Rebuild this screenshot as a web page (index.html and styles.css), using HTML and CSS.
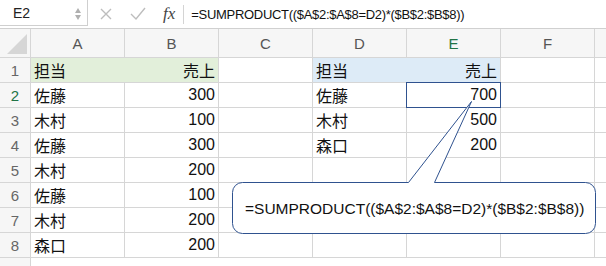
FILE: index.html
```html
<!DOCTYPE html>
<html lang="ja">
<head>
    <meta charset="UTF-8">
    <title>SUMPRODUCT</title>
    <link rel="stylesheet" href="styles.css">
</head>
<body>

<div class="formula-bar">
    <div class="name-box">
        <span>E2</span>
        <svg class="spin" width="8" height="16" viewBox="0 0 8 16">
            <path d="M1 8 L4 3 L7 8 Z" fill="#b0b0b0"/>
            <path d="M1 10 L4 15 L7 10 Z" fill="#b0b0b0"/>
        </svg>
    </div>
    <div class="actions">
        <svg width="14" height="14" viewBox="0 0 14 14">
            <path d="M2 2 L12 12 M12 2 L2 12" stroke="#bdbdbd" stroke-width="1.4" fill="none"/>
        </svg>
        <svg width="16" height="14" viewBox="0 0 16 14">
            <path d="M1 7 L6 12 L15 1" stroke="#bdbdbd" stroke-width="1.4" fill="none"/>
        </svg>
    </div>
    <div class="fx">fx</div>
    <div class="formula">=SUMPRODUCT(($A$2:$A$8=D2)*($B$2:$B$8))</div>
</div>

<div class="sheet">
    <div class="corner">
        <svg width="30" height="28" viewBox="0 0 30 28"><path d="M7 25 L27 25 L27 5 Z" fill="#d6d6d6"/></svg>
    </div>
    <div class="hd">A</div>
    <div class="hd">B</div>
    <div class="hd">C</div>
    <div class="hd">D</div>
    <div class="hd active">E</div>
    <div class="hd">F</div>
    <div class="hd"></div>

    <div class="rn">1</div>
    <div class="c green join">担当</div>
    <div class="c green num">売上</div>
    <div class="c"></div>
    <div class="c blue join">担当</div>
    <div class="c blue num">売上</div>
    <div class="c"></div>
    <div class="c"></div>

    <div class="rn active">2</div>
    <div class="c">佐藤</div>
    <div class="c num">300</div>
    <div class="c"></div>
    <div class="c">佐藤</div>
    <div class="c num selected">700</div>
    <div class="c"></div>
    <div class="c"></div>

    <div class="rn">3</div>
    <div class="c">木村</div>
    <div class="c num">100</div>
    <div class="c"></div>
    <div class="c">木村</div>
    <div class="c num">500</div>
    <div class="c"></div>
    <div class="c"></div>

    <div class="rn">4</div>
    <div class="c">佐藤</div>
    <div class="c num">300</div>
    <div class="c"></div>
    <div class="c">森口</div>
    <div class="c num">200</div>
    <div class="c"></div>
    <div class="c"></div>

    <div class="rn">5</div>
    <div class="c">木村</div>
    <div class="c num">200</div>
    <div class="c"></div>
    <div class="c"></div>
    <div class="c"></div>
    <div class="c"></div>
    <div class="c"></div>

    <div class="rn">6</div>
    <div class="c">佐藤</div>
    <div class="c num">100</div>
    <div class="c"></div>
    <div class="c"></div>
    <div class="c"></div>
    <div class="c"></div>
    <div class="c"></div>

    <div class="rn">7</div>
    <div class="c">木村</div>
    <div class="c num">200</div>
    <div class="c"></div>
    <div class="c"></div>
    <div class="c"></div>
    <div class="c"></div>
    <div class="c"></div>

    <div class="rn">8</div>
    <div class="c">森口</div>
    <div class="c num">200</div>
    <div class="c"></div>
    <div class="c"></div>
    <div class="c"></div>
    <div class="c"></div>
    <div class="c"></div>
</div>

<!-- callout shape laid over the sheet -->
<svg class="callout" width="606" height="266" viewBox="0 0 606 266">
    <path d="M242.5 182.5 H408.5 L471.5 101.5 L434.5 182.5 H585.5 A10 10 0 0 1 595.5 192.5 V223.5 A10 10 0 0 1 585.5 233.5 H242.5 A10 10 0 0 1 232.5 223.5 V192.5 A10 10 0 0 1 242.5 182.5 Z"
          fill="#fff" stroke="#2f528f" stroke-width="1"/>
    <text x="245" y="214" class="callout-text">=SUMPRODUCT(($A$2:$A$8=D2)*($B$2:$B$8))</text>
</svg>

</body>
</html>
```

FILE: styles.css
```css
body {
    margin: 0;
    width: 606px;
    height: 266px;
    overflow: hidden;
    position: relative;
    background-color: #fff;
    font-family: "Liberation Sans", "Noto Sans CJK JP", sans-serif;
}
.formula-bar {
    display: flex;
    align-items: center;
    height: 28px;
    border-bottom: 1px solid #d0d0d0;
    background-color: #fff;
}
.name-box {
    box-sizing: border-box;
    width: 88px;
    height: 26px;
    align-self: flex-start;
    border: 1px solid #cfcfcf;
    border-left: none;
    border-top: none;
    display: flex;
    align-items: center;
    justify-content: space-between;
    padding: 0 5px 0 13px;
    font-size: 14px;
    color: #222;
}
.actions {
    display: flex;
    align-items: center;
    gap: 17px;
    margin-left: 11px;
    width: 64px;
}
.fx {
    font-family: "Liberation Serif", serif;
    font-style: italic;
    font-size: 17px;
    color: #444;
    padding: 0 8px 2px 0;
    border-right: 1px solid #d4d4d4;
    line-height: 17px;
}
.formula {
    margin-left: 7px;
    font-size: 13px;
    letter-spacing: -0.3px;
    color: #111;
    white-space: nowrap;
}
.sheet {
    display: grid;
    grid-template-columns: 30px repeat(6, 93px) 1fr;
    grid-template-rows: 28px repeat(8, 24px) 9px;
    gap: 1px;
    background-color: #d6d6d6;
}
.sheet::after {
    content: "";
    grid-column: 1 / -1;
    background: linear-gradient(to right, #f6f6f6 30px, #d6d6d6 30px, #d6d6d6 31px, #fff 31px);
}
.corner,
.hd,
.rn {
    background-color: #f6f6f6;
}
.hd {
    display: flex;
    align-items: center;
    justify-content: center;
    font-size: 15px;
    color: #555;
}
.rn {
    display: flex;
    align-items: center;
    justify-content: center;
    font-size: 15px;
    color: #666;
}
.hd.active,
.rn.active {
    color: #217346;
}
.c {
    background-color: #fff;
    display: flex;
    align-items: center;
    padding: 0 3px;
    font-size: 16px;
    color: #111;
    white-space: nowrap;
}
.num {
    justify-content: flex-end;
}
.green {
    background-color: #e2efda;
}
.blue {
    background-color: #ddebf7;
}
.green.join {
    box-shadow: 1px 0 0 #e2efda;
}
.blue.join {
    box-shadow: 1px 0 0 #ddebf7;
}
.selected {
    outline: 1px solid #2f528f;
}
.callout {
    position: absolute;
    left: 0;
    top: 0;
}
.callout-text {
    font-family: "Liberation Sans", sans-serif;
    font-size: 15.5px;
    fill: #111;
}
```
